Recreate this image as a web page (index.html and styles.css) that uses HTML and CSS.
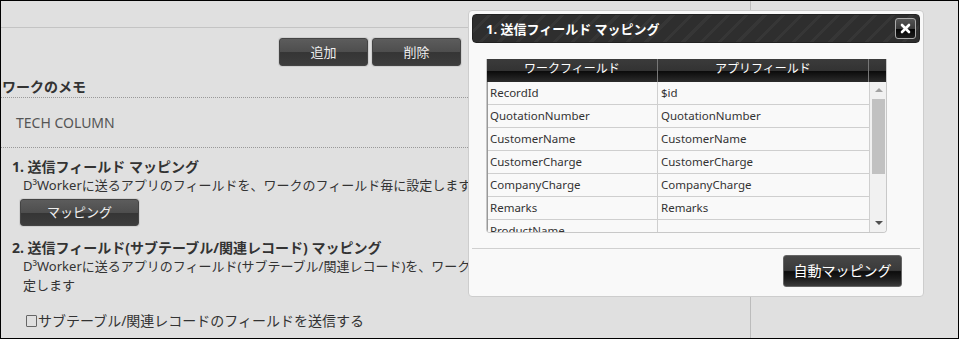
FILE: index.html
```html
<!DOCTYPE html>
<html>
<head lang="ja">
    <meta charset="UTF-8">
    <title>送信フィールド マッピング</title>
    <link rel="stylesheet" href="styles.css">
</head>
<body>
<div id="page">
    <div id="main">
        <div class="topbar"></div>
        <div class="toolbar">
            <span class="btn">追加</span>
            <span class="btn">削除</span>
        </div>
        <h2 class="memo-title">ワークのメモ</h2>
        <div class="memo">TECH COLUMN</div>
        <div class="section">
            <h3 class="sec-title">1. 送信フィールド マッピング</h3>
            <p class="sec-desc">D³Workerに送るアプリのフィールドを、ワークのフィールド毎に設定します</p>
            <span class="btn btn-map">マッピング</span>
            <h3 class="sec-title sec-title2">2. 送信フィールド(サブテーブル/関連レコード) マッピング</h3>
            <p class="sec-desc sec-desc2">D³Workerに送るアプリのフィールド(サブテーブル/関連レコード)を、ワークのフィールド毎に設定します</p>
            <label class="check"><span class="box"></span>サブテーブル/関連レコードのフィールドを送信する</label>
        </div>
    </div>
    <div id="side"></div>
</div>

<div id="dialog">
    <div class="dlg-head">
        <span class="dlg-title">1. 送信フィールド マッピング</span>
        <span class="dlg-close">
            <svg width="11" height="11" viewBox="0 0 11 11">
                <path d="M2 2 L9 9 M9 2 L2 9" stroke="#fff" stroke-width="2.6" stroke-linecap="round"/>
            </svg>
        </span>
    </div>
    <div class="dlg-body">
        <div class="grid">
            <div class="grid-head">
                <div class="gh c1">ワークフィールド</div>
                <div class="gh c2">アプリフィールド</div>
                <div class="gh c3"></div>
            </div>
            <div class="grid-body">
                <div class="rows">
                    <div class="row"><div class="cell c1">RecordId</div><div class="cell c2">$id</div></div>
                    <div class="row"><div class="cell c1">QuotationNumber</div><div class="cell c2">QuotationNumber</div></div>
                    <div class="row"><div class="cell c1">CustomerName</div><div class="cell c2">CustomerName</div></div>
                    <div class="row"><div class="cell c1">CustomerCharge</div><div class="cell c2">CustomerCharge</div></div>
                    <div class="row"><div class="cell c1">CompanyCharge</div><div class="cell c2">CompanyCharge</div></div>
                    <div class="row"><div class="cell c1">Remarks</div><div class="cell c2">Remarks</div></div>
                    <div class="row"><div class="cell c1">ProductName</div><div class="cell c2"></div></div>
                </div>
                <div class="scroll">
                    <span class="arrow up"></span>
                    <span class="thumb"></span>
                    <span class="arrow down"></span>
                </div>
            </div>
        </div>
    </div>
    <div class="dlg-foot">
        <span class="btn-auto">自動マッピング</span>
    </div>
</div>
</body>
</html>
```

FILE: styles.css
```css
* {
    margin: 0;
    padding: 0;
    box-sizing: border-box;
}

html, body {
    height: 100%;
}

body {
    border: 1px solid #000;
    background: #e0e0e0;
    overflow: hidden;
    font-family: "Noto Sans", "Noto Sans CJK JP", sans-serif;
    font-size: 13px;
    color: #333;
    position: relative;
}

#page {
    display: flex;
    height: 100%;
}

#main {
    width: 750px;
    height: 100%;
    border-right: 1px solid #bcbcbc;
}

#side {
    flex: 1;
}

.topbar {
    height: 27px;
    border-bottom: 1px solid #c4c4c4;
}

.toolbar {
    display: flex;
    justify-content: flex-end;
    gap: 4px;
    width: 460px;
    padding-top: 10px;
}

.btn {
    display: inline-block;
    width: 89px;
    height: 28px;
    line-height: 26px;
    text-align: center;
    color: #eee;
    font-size: 13px;
    border: 1px solid #444;
    border-radius: 3px;
    background: linear-gradient(#5c5c5c 0, #4e4e4e 50%, #353535 52%, #3d3d3d 100%);
    box-shadow: 0 0 0 1px #cfcfcf;
    cursor: pointer;
}

.memo-title {
    margin-top: 11px;
    padding-left: 1px;
    font-size: 14px;
    line-height: 20px;
    font-weight: bold;
    border-bottom: 1px dotted #999;
}

.memo {
    height: 50px;
    line-height: 49px;
    padding-left: 15px;
    font-size: 14px;
    color: #555;
    border-bottom: 1px dotted #999;
}

.section {
    padding-left: 11px;
}

.sec-title {
    margin-top: 9px;
    font-size: 14px;
    line-height: 19px;
    font-weight: bold;
}

.sec-title2 {
    margin-top: 12px;
}

.sec-desc {
    padding-left: 11px;
    line-height: 19px;
}

.sec-desc2 {
    width: 581px;
}

.btn-map {
    width: 119px;
    height: 27px;
    line-height: 25px;
    margin: 4px 0 0 8px;
}

.check {
    display: block;
    margin-top: 16px;
    padding-left: 14px;
    font-size: 14px;
    line-height: 19px;
}

.check .box {
    display: inline-block;
    width: 11px;
    height: 12px;
    border: 1px solid #666;
    border-radius: 1px;
    vertical-align: -1px;
    margin-right: 1px;
}

/* dialog */
#dialog {
    position: absolute;
    left: 467px;
    top: 9px;
    width: 456px;
    height: 287px;
    padding: 3px;
    background: #f9f9f9;
    border: 1px solid #cdcdcd;
    border-radius: 4px;
}

.dlg-head {
    display: flex;
    align-items: center;
    justify-content: space-between;
    height: 29px;
    padding: 0 3px 0 13px;
    border-radius: 4px;
    background: repeating-linear-gradient(135deg, #2e2e2e 0, #2e2e2e 10px, #363636 10px, #363636 13px);
    border: 1px solid #222;
}

.dlg-title {
    color: #fff;
    font-weight: bold;
    font-size: 13px;
    line-height: 20px;
}

.dlg-close {
    display: flex;
    align-items: center;
    justify-content: center;
    width: 21px;
    height: 21px;
    border: 1px solid #aaa;
    border-radius: 3px;
    background: linear-gradient(#555 0, #3a3a3a 50%, #050505 55%, #1e1e1e 100%);
}

.dlg-body {
    padding: 16px 0 15px 14px;
    border-bottom: 1px solid #d0d0d0;
}

.grid {
    width: 401px;
    border: 1px solid #c8c8c8;
    border-top: 0;
    border-radius: 0 0 4px 4px;
    overflow: hidden;
    font-size: 11.5px;
}

.grid-head {
    display: flex;
    height: 23px;
    background: linear-gradient(#3b3b3b 0, #333 50%, #0a0a0a 52%, #2c2c2c 100%);
    color: #fff;
    font-size: 12px;
}

.gh {
    text-align: center;
    line-height: 18px;
    font-family: "Noto Sans CJK JP", sans-serif;
}

.c1 {
    width: 171px;
}

.c2 {
    width: 211px;
}

.c3 {
    flex: 1;
}

.gh.c1, .gh.c2 {
    border-right: 1px solid #777;
}

.grid-body {
    display: flex;
    height: 150px;
    border-left: 1px solid #999;
}

.rows {
    width: 381px;
    overflow: hidden;
    background: #f9f9f9;
}

.row {
    display: flex;
    height: 23px;
    border-bottom: 1px solid #cfcfcf;
}

.cell {
    line-height: 22px;
    padding-left: 2px;
    white-space: nowrap;
}

.cell.c1 {
    width: 170px;
    border-right: 1px solid #cfcfcf;
}

.cell.c2 {
    padding-left: 3px;
}

.scroll {
    position: relative;
    flex: 1;
    background: #f1f1f1;
    border-left: 1px solid #cfcfcf;
}

.thumb {
    position: absolute;
    left: 2px;
    top: 17px;
    width: 13px;
    height: 75px;
    background: #c1c1c1;
}

.arrow {
    position: absolute;
    left: 5px;
    width: 0;
    height: 0;
    border-left: 4px solid transparent;
    border-right: 4px solid transparent;
}

.arrow.up {
    top: 6px;
    border-bottom: 4px solid #a3a3a3;
}

.arrow.down {
    bottom: 7px;
    border-top: 4px solid #505050;
}

.dlg-foot {
    display: flex;
    justify-content: flex-end;
    padding: 6px 18px 0 0;
}

.btn-auto {
    display: inline-block;
    width: 119px;
    height: 32px;
    line-height: 30px;
    text-align: center;
    color: #fff;
    font-size: 14px;
    border: 1px solid #666;
    border-radius: 3px;
    background: linear-gradient(#474747 0, #3a3a3a 48%, #0c0c0c 52%, #1d1d1d 75%, #3a3a3a 100%);
    cursor: pointer;
}
```
